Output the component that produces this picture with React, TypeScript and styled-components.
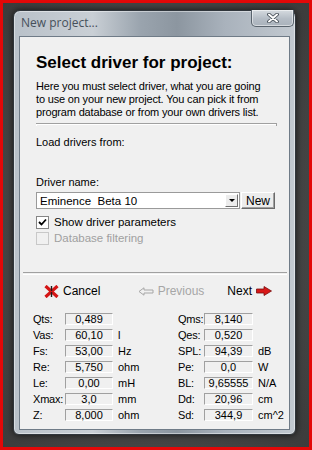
import { Fragment } from 'react';
import styled, { createGlobalStyle } from 'styled-components';

const GlobalStyle = createGlobalStyle`
	html, body {
		margin: 0;
		padding: 0;
	}
	body {
		font-family: 'Liberation Sans', Arial, sans-serif;
		font-size: 11px;
		color: #000;
	}
`;

interface ParamRow {
	label: string;
	value: string;
	unit: string;
}

const leftParams: ParamRow[] = [
	{ label: 'Qts:', value: '0,489', unit: '' },
	{ label: 'Vas:', value: '60,10', unit: 'l' },
	{ label: 'Fs:', value: '53,00', unit: 'Hz' },
	{ label: 'Re:', value: '5,750', unit: 'ohm' },
	{ label: 'Le:', value: '0,00', unit: 'mH' },
	{ label: 'Xmax:', value: '3,0', unit: 'mm' },
	{ label: 'Z:', value: '8,000', unit: 'ohm' },
];

const rightParams: ParamRow[] = [
	{ label: 'Qms:', value: '8,140', unit: '' },
	{ label: 'Qes:', value: '0,520', unit: '' },
	{ label: 'SPL:', value: '94,39', unit: 'dB' },
	{ label: 'Pe:', value: '0,0', unit: 'W' },
	{ label: 'BL:', value: '9,65555', unit: 'N/A' },
	{ label: 'Dd:', value: '20,96', unit: 'cm' },
	{ label: 'Sd:', value: '344,9', unit: 'cm^2' },
];

const Screen = styled.div`
	width: 312px;
	height: 450px;
	box-sizing: border-box;
	border: 3px solid #e30808;
	background: radial-gradient(ellipse at 50% 50%, #555 0%, #474747 60%, #3c3c3c 100%);
	padding: 7px 13px 12px 10px;
	display: flex;
`;

const Window = styled.div`
	flex: 1;
	display: flex;
	flex-direction: column;
	border: 1px solid #30363c;
	border-radius: 7px 7px 6px 6px;
	padding: 0 5px 4px 5px;
	background: linear-gradient(90deg, #b9c1c9 0%, #c9cfd5 28%, #9aa4ae 45%, #8c96a0 58%, #a9b2bc 75%, #c2c9d0 100%);
	box-shadow: 0 0 7px rgba(0, 0, 0, 0.7), inset 0 0 0 1px rgba(255, 255, 255, 0.45);
`;

const TitleBar = styled.div`
	height: 25px;
	display: flex;
	align-items: flex-start;
	justify-content: space-between;
	margin-right: -4px;
`;

const Title = styled.span`
	font-family: 'Open Sans', 'Noto Sans', sans-serif;
	font-size: 12px;
	color: #46505b;
	padding: 5px 0 0 2px;
	line-height: 14px;
`;

const CloseButton = styled.div`
	width: 41px;
	height: 16px;
	margin-top: -1px;
	display: flex;
	align-items: center;
	justify-content: center;
	border: 1px solid #59636d;
	border-top: none;
	border-radius: 0 0 5px 5px;
	background: linear-gradient(#d6dbe0, #b4bcc5 55%, #a9b2bb);
	box-shadow: inset 0 0 0 1px rgba(255, 255, 255, 0.5);
`;

const Client = styled.div`
	flex: 1;
	display: flex;
	flex-direction: column;
	background: #f0f0f0;
	border: 1px solid #6f7b87;
`;

const TopSection = styled.div`
	display: flex;
	flex-direction: column;
	padding: 16px 12px 0 16px;
`;

const Heading = styled.h1`
	margin: 0;
	font-size: 17px;
	line-height: 20px;
	font-weight: bold;
`;

const Paragraph = styled.p`
	margin: 7px 0 0;
	line-height: 13px;
	letter-spacing: -0.17px;
	white-space: nowrap;
`;

const PanelEdge = styled.div`
	margin-top: 4px;
	height: 2px;
	border-top: 1px solid #a0a0a0;
	border-right: 1px solid #a0a0a0;
	box-shadow: inset 1px 1px 0 #fff;
`;

const Label = styled.div<{ $top: number }>`
	margin-top: ${(p) => p.$top}px;
	line-height: 13px;
`;

const ComboRow = styled.div`
	margin-top: 3px;
	display: flex;
	height: 17px;
	margin-right: 2px;
`;

const Combo = styled.div`
	flex: 1;
	display: flex;
	align-items: center;
	justify-content: space-between;
	background: #fff;
	border: 1px solid #9a9a9a;
	padding: 0 1px 0 3px;
	font-size: 11.5px;
`;

const DropButton = styled.div`
	width: 11px;
	height: 11px;
	display: flex;
	align-items: center;
	justify-content: center;
	background: #ececec;
	border: 1px solid;
	border-color: #fff #707070 #707070 #fff;
`;

const Arrow = styled.span`
	width: 0;
	height: 0;
	border-left: 3px solid transparent;
	border-right: 3px solid transparent;
	border-top: 3px solid #000;
`;

const PushButton = styled.div`
	width: 32px;
	margin-left: 1px;
	display: flex;
	align-items: center;
	justify-content: center;
	font-size: 12px;
	background: #ececec;
	border: 1px solid;
	border-color: #fff #6a6a6a #6a6a6a #fff;
	box-shadow: inset -1px -1px 0 #a0a0a0;
`;

const CheckRow = styled.label<{ $top: number; $disabled?: boolean }>`
	margin-top: ${(p) => p.$top}px;
	height: 16px;
	display: flex;
	align-items: center;
	gap: 5px;
	color: ${(p) => (p.$disabled ? '#a0a0a0' : '#000')};
	font-size: 11.5px;
`;

const CheckBox = styled.span<{ $disabled?: boolean }>`
	width: 11px;
	height: 11px;
	display: flex;
	align-items: center;
	justify-content: center;
	background: ${(p) => (p.$disabled ? '#f0f0f0' : '#fff')};
	border: 1px solid ${(p) => (p.$disabled ? '#c8c8c8' : '#858585')};
`;

const BottomSection = styled.div`
	display: flex;
	flex-direction: column;
	padding: 0 2px 0 3px;
`;

const Groove = styled.div`
	margin-top: 26px;
	height: 1px;
	border-top: 1px solid #a0a0a0;
	border-bottom: 1px solid #fff;
`;

const ButtonRow = styled.div`
	margin-top: 7px;
	height: 18px;
	display: flex;
	align-items: center;
	padding: 0 15px 0 21px;
	font-size: 12px;
`;

const NavButton = styled.div<{ $disabled?: boolean; $gapLeft?: number }>`
	display: flex;
	align-items: center;
	gap: 4px;
	margin-left: ${(p) => p.$gapLeft || 0}px;
	color: ${(p) => (p.$disabled ? '#a6a6a6' : '#000')};
`;

const Spacer = styled.div`
	flex: 1;
`;

const ParamGrid = styled.div`
	margin-top: 13px;
	padding-left: 10px;
	display: grid;
	grid-template-columns: 32px 48px 65px 26px 49px 1fr;
	grid-auto-rows: 12px;
	row-gap: 4px;
	align-items: center;
	font-size: 11px;
`;

const ParamLabel = styled.span`
	line-height: 12px;
	letter-spacing: -0.2px;
	white-space: nowrap;
`;

const ValueBox = styled.span`
	height: 12px;
	box-sizing: border-box;
	display: flex;
	align-items: center;
	justify-content: center;
	border: 1px solid;
	border-color: #a0a0a0 #fff #fff #a0a0a0;
	line-height: 10px;
`;

const Unit = styled.span`
	padding-left: 5px;
	line-height: 12px;
`;

const CloseGlyph = () => (
	<svg width="12" height="10" viewBox="0 0 12 10">
		<path d="M2 1.5 L10 8.5 M10 1.5 L2 8.5" stroke="#39424b" strokeWidth="3.6" strokeLinecap="round" />
		<path d="M2 1.5 L10 8.5 M10 1.5 L2 8.5" stroke="#fff" strokeWidth="2" strokeLinecap="round" />
	</svg>
);

const CheckMark = () => (
	<svg width="9" height="9" viewBox="0 0 9 9">
		<path d="M1 4 L3.5 6.5 L8 1.5" stroke="#000" strokeWidth="1.8" fill="none" />
	</svg>
);

const CancelIcon = () => (
	<svg width="15" height="13" viewBox="0 0 15 13">
		<path d="M1.5 1 L13.5 12 M13.5 1 L1.5 12" stroke="#d41515" strokeWidth="3.2" />
		<path d="M7.5 1 L7.5 12" stroke="#1c1c1c" strokeWidth="1.4" />
		<path d="M6 6.5 L9 6.5" stroke="#d41515" strokeWidth="1.2" />
	</svg>
);

const PrevIcon = () => (
	<svg width="16" height="9" viewBox="0 0 16 9">
		<path d="M1 4.5 L6 0.8 L6 3 L15 3 L15 6 L6 6 L6 8.2 Z" fill="none" stroke="#a6a6a6" strokeWidth="1" />
	</svg>
);

const NextIcon = () => (
	<svg width="16" height="10" viewBox="0 0 16 10">
		<path d="M0.5 3 L8 3 L8 0.5 L15.5 5 L8 9.5 L8 7 L0.5 7 Z" fill="#d81818" stroke="#7a0c0c" strokeWidth="0.8" />
	</svg>
);

const App = () => {
	const rows = leftParams.map((l, i) => ({ l, r: rightParams[i] }));
	return (
		<>
			<GlobalStyle />
			<Screen>
				<Window>
					<TitleBar>
						<Title>New project...</Title>
						<CloseButton>
							<CloseGlyph />
						</CloseButton>
					</TitleBar>
					<Client>
						<TopSection>
							<Heading>Select driver for project:</Heading>
							<Paragraph>
								Here you must select driver, what you are going
								<br />
								to use on your new project. You can pick it from
								<br />
								program database or from your own drivers list.
							</Paragraph>
							<PanelEdge />
							<Label $top={10}>Load drivers from:</Label>
							<Label $top={27}>Driver name:</Label>
							<ComboRow>
								<Combo>
									<span>Eminence&nbsp; Beta 10</span>
									<DropButton>
										<Arrow />
									</DropButton>
								</Combo>
								<PushButton>New</PushButton>
							</ComboRow>
							<CheckRow $top={5}>
								<CheckBox>
									<CheckMark />
								</CheckBox>
								Show driver parameters
							</CheckRow>
							<CheckRow $top={0} $disabled>
								<CheckBox $disabled />
								Database filtering
							</CheckRow>
						</TopSection>
						<BottomSection>
							<Groove />
							<ButtonRow>
								<NavButton>
									<CancelIcon />
									Cancel
								</NavButton>
								<Spacer />
								<NavButton $disabled>
									<PrevIcon />
									Previous
								</NavButton>
								<NavButton $gapLeft={23}>
									Next
									<NextIcon />
								</NavButton>
							</ButtonRow>
							<ParamGrid>
								{rows.map(({ l, r }) => (
									<Fragment key={l.label}>
										<ParamLabel>{l.label}</ParamLabel>
										<ValueBox>{l.value}</ValueBox>
										<Unit>{l.unit}</Unit>
										<ParamLabel>{r.label}</ParamLabel>
										<ValueBox>{r.value}</ValueBox>
										<Unit>{r.unit}</Unit>
									</Fragment>
								))}
							</ParamGrid>
						</BottomSection>
					</Client>
				</Window>
			</Screen>
		</>
	);
};

export default App;
